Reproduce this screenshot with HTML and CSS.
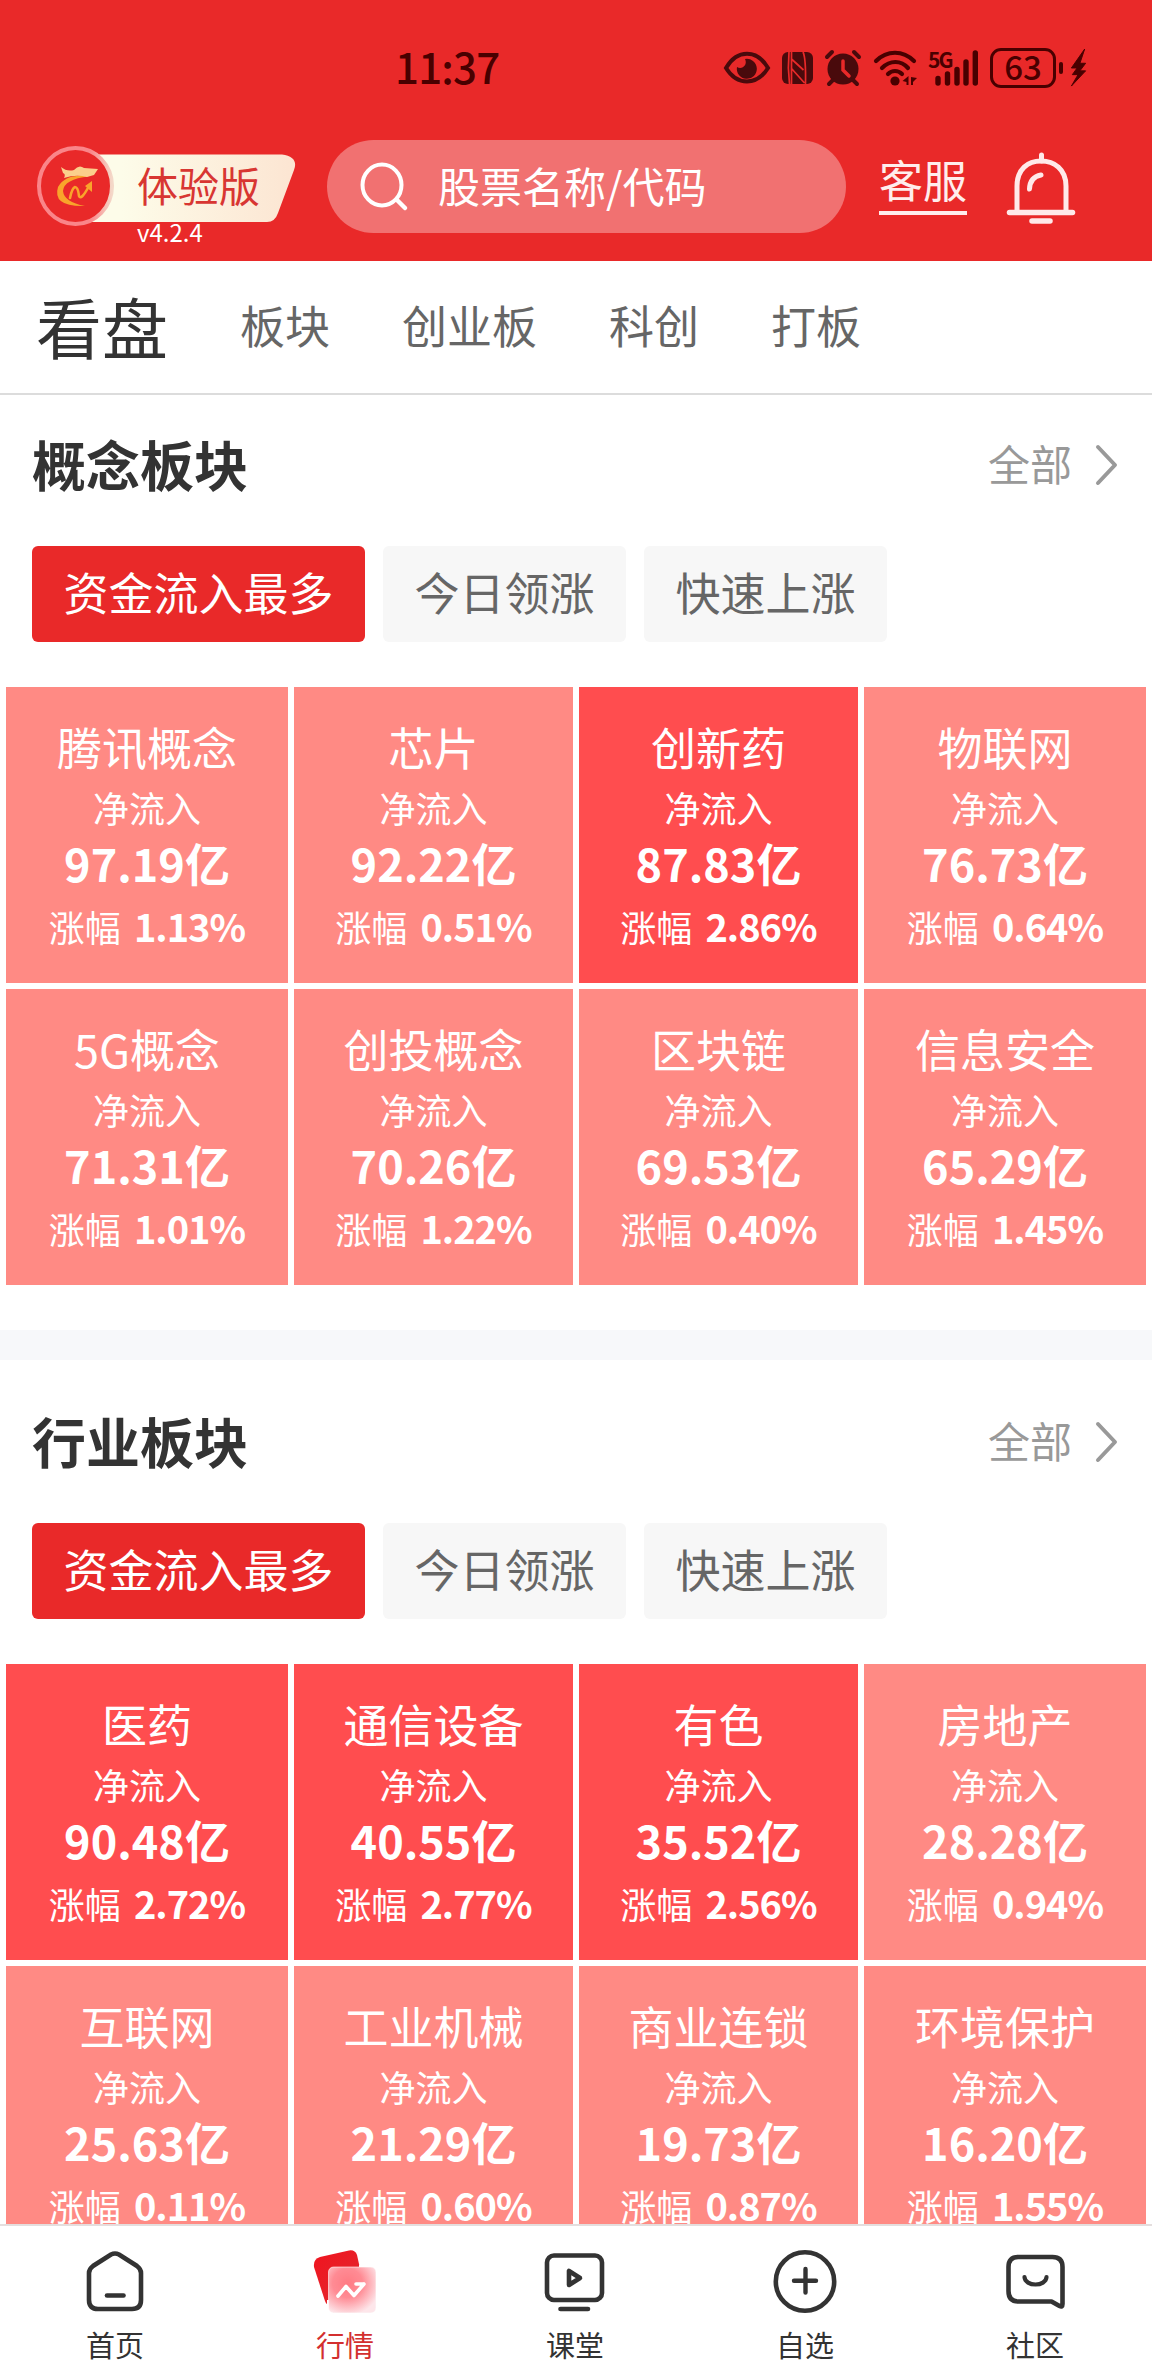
FILE: index.html
```html
<!DOCTYPE html>
<html lang="zh-CN">
<head>
  <meta charset="UTF-8" />
  <meta name="viewport" content="width=device-width, initial-scale=1" />
  <title>行情</title>
  <link rel="stylesheet" href="styles.css">
</head>
<body>
  <header class="header">
    <div class="status">
      <div class="time">11:37</div>
      <div class="status-icons">
        <svg class="i-eye" width="46" height="34" viewBox="0 0 46 34"><path d="M2 17C13-2 33-2 44 17C33 35 13 35 2 17Z" fill="none" stroke="#490a0c" stroke-width="4"/><path d="M21 8a10 10 0 1 1-8 8c5 3 11-2 8-8z" fill="#490a0c"/></svg>
        <svg class="i-nfc" width="31" height="34" viewBox="0 0 31 34"><rect width="31" height="32" y="1" rx="6" fill="#490a0c"/><path d="M7 1Q5.500 17 7.500 33M21 1Q24 7 23.500 33M9.500 1V33M9.500 8L21.500 19M9.500 17.500L22.500 32" stroke="#e92929" stroke-width="1.700" fill="none"/></svg>
        <svg class="i-alarm" width="36" height="36" viewBox="0 0 36 36"><circle cx="18" cy="19" r="15.5" fill="#490a0c"/><path d="M2 7L7 2M34 7L29 2M8 30L4 34M28 30L32 34" stroke="#490a0c" stroke-width="4" stroke-linecap="round"/><path d="M18 11V20L24 26" fill="none" stroke="#e92929" stroke-width="3.5" stroke-linecap="round"/></svg>
        <svg class="i-wifi" width="46" height="38" viewBox="0 0 46 38"><g fill="none" stroke="#490000" stroke-width="4.2" stroke-linecap="round"><path d="M3 12C14 1 30 1 41 12"/><path d="M9 19C17 11 28 11 35 19"/><path d="M15 25C19 21 25 21 29 25"/></g><circle cx="22" cy="32" r="4.6" fill="#490000"/><path d="M35.500 27v9h-2v-3l-4-1zM38 28l6 1-4 4v3h-2z" fill="#490000"/></svg>
        <div class="signal">
          <span class="net">5G</span>
          <svg width="50" height="37" viewBox="0 0 50 37"><path d="M10 29.500V34M19.500 25V34M29 20.500V34M38 13V34M47.300 4V34" stroke="#490000" stroke-width="5.400" stroke-linecap="round"/></svg>
        </div>
        <div class="battery">63</div>
        <div class="battery-tip"></div>
        <svg class="i-bolt" width="17" height="38" viewBox="0 0 17 40"><path d="M15 0L1 20H7L2 27H8L1 39L16 23H10L16 15H10Z" fill="#490000" stroke="#490000" stroke-linejoin="round"/></svg>
      </div>
    </div>
    <div class="topbar">
      <div class="brand">
        <svg width="264" height="82" viewBox="0 0 264 82">
          <defs>
            <linearGradient id="cream" x1="0" x2="1" y1="0" y2="0"><stop offset="0.150" stop-color="#fdfce9"/><stop offset="1" stop-color="#fce5d2"/></linearGradient>
            <linearGradient id="ring" x1="0" x2="1" y1="0" y2="0"><stop offset="0" stop-color="#fa8589"/><stop offset="0.700" stop-color="#fa8589"/><stop offset="1" stop-color="#f4d8c8"/></linearGradient>
          </defs>
          <path d="M55 9.500H246Q263 12 258 25L242 68Q239 77 231 77H55Z" fill="url(#cream)"/>
          <ellipse cx="39.500" cy="41" rx="36.500" ry="38" fill="#e92929" stroke="url(#ring)" stroke-width="4"/>
          <path d="M53 31.500Q30 28 22 42Q16 62 49 61Q28 57 27 46Q28 34 53 31.500Z" fill="#f9a42b"/>
          <path d="M25 22Q31 27 38 25Q43 19 48 23L62 24L58 30L51 32Q40 29 28 33Q30 29 27 28Z" fill="#fbcf8c"/>
          <path d="M34 53Q36 43 39 42Q42 42 43 51Q45 56 53 41" fill="none" stroke="#f9a42b" stroke-width="2.600" stroke-linecap="round"/>
          <path d="M49 41L56 36V47Z" fill="#f9a42b"/>
        </svg>
        <span class="brand-name">体验版</span>
        <span class="version">v4.2.4</span>
      </div>
      <div class="search">
        <svg width="48" height="50" viewBox="0 0 48 50"><ellipse cx="22" cy="23" rx="19.500" ry="20.500" fill="none" stroke="#fff" stroke-width="4"/><path d="M37 38L45 46" stroke="#fff" stroke-width="4.500" stroke-linecap="round"/></svg>
        <span>股票名称/代码</span>
      </div>
      <div class="service">客服</div>
      <svg class="bell" width="70" height="74" viewBox="0 0 70 74"><g fill="none" stroke="#ffe9e9" stroke-linecap="round"><path d="M35.500 2V8" stroke-width="5"/><path d="M11 59V33C11 16 22 8 35 8S60 16 60 33V59" stroke-width="5"/><path d="M3.500 59.500H66.500" stroke-width="5.500"/><path d="M26 68H44" stroke-width="5.500"/><path d="M23.500 36Q24 24 35 22" stroke-width="5"/></g></svg>
    </div>
  </header>

  <nav class="tabs">
    <span class="tab active">看盘</span>
    <span class="tab">板块</span>
    <span class="tab">创业板</span>
    <span class="tab">科创</span>
    <span class="tab">打板</span>
  </nav>

  <main class="content">
    <section class="board">
      <div class="board-head">
        <h2>概念板块</h2>
        <div class="more">全部<svg width="22" height="40" viewBox="0 0 22 40"><path d="M2 2L19 20L2 38" fill="none" stroke="#999" stroke-width="4" stroke-linecap="round" stroke-linejoin="round"/></svg></div>
      </div>
      <div class="filters">
        <button class="filter on">资金流入最多</button>
        <button class="filter">今日领涨</button>
        <button class="filter">快速上涨</button>
      </div>
      <div class="grid">
        <div class="cell"><div class="name">腾讯概念</div><div class="label">净流入</div><div class="amount">97.19亿</div><div class="rate">涨幅 <b>1.13%</b></div></div>
        <div class="cell"><div class="name">芯片</div><div class="label">净流入</div><div class="amount">92.22亿</div><div class="rate">涨幅 <b>0.51%</b></div></div>
        <div class="cell hot"><div class="name">创新药</div><div class="label">净流入</div><div class="amount">87.83亿</div><div class="rate">涨幅 <b>2.86%</b></div></div>
        <div class="cell"><div class="name">物联网</div><div class="label">净流入</div><div class="amount">76.73亿</div><div class="rate">涨幅 <b>0.64%</b></div></div>
        <div class="cell"><div class="name">5G概念</div><div class="label">净流入</div><div class="amount">71.31亿</div><div class="rate">涨幅 <b>1.01%</b></div></div>
        <div class="cell"><div class="name">创投概念</div><div class="label">净流入</div><div class="amount">70.26亿</div><div class="rate">涨幅 <b>1.22%</b></div></div>
        <div class="cell"><div class="name">区块链</div><div class="label">净流入</div><div class="amount">69.53亿</div><div class="rate">涨幅 <b>0.40%</b></div></div>
        <div class="cell"><div class="name">信息安全</div><div class="label">净流入</div><div class="amount">65.29亿</div><div class="rate">涨幅 <b>1.45%</b></div></div>
      </div>
    </section>

    <div class="divider"></div>

    <section class="board">
      <div class="board-head">
        <h2>行业板块</h2>
        <div class="more">全部<svg width="22" height="40" viewBox="0 0 22 40"><path d="M2 2L19 20L2 38" fill="none" stroke="#999" stroke-width="4" stroke-linecap="round" stroke-linejoin="round"/></svg></div>
      </div>
      <div class="filters">
        <button class="filter on">资金流入最多</button>
        <button class="filter">今日领涨</button>
        <button class="filter">快速上涨</button>
      </div>
      <div class="grid">
        <div class="cell hot"><div class="name">医药</div><div class="label">净流入</div><div class="amount">90.48亿</div><div class="rate">涨幅 <b>2.72%</b></div></div>
        <div class="cell hot"><div class="name">通信设备</div><div class="label">净流入</div><div class="amount">40.55亿</div><div class="rate">涨幅 <b>2.77%</b></div></div>
        <div class="cell hot"><div class="name">有色</div><div class="label">净流入</div><div class="amount">35.52亿</div><div class="rate">涨幅 <b>2.56%</b></div></div>
        <div class="cell"><div class="name">房地产</div><div class="label">净流入</div><div class="amount">28.28亿</div><div class="rate">涨幅 <b>0.94%</b></div></div>
        <div class="cell"><div class="name">互联网</div><div class="label">净流入</div><div class="amount">25.63亿</div><div class="rate">涨幅 <b>0.11%</b></div></div>
        <div class="cell"><div class="name">工业机械</div><div class="label">净流入</div><div class="amount">21.29亿</div><div class="rate">涨幅 <b>0.60%</b></div></div>
        <div class="cell"><div class="name">商业连锁</div><div class="label">净流入</div><div class="amount">19.73亿</div><div class="rate">涨幅 <b>0.87%</b></div></div>
        <div class="cell"><div class="name">环境保护</div><div class="label">净流入</div><div class="amount">16.20亿</div><div class="rate">涨幅 <b>1.55%</b></div></div>
      </div>
    </section>
  </main>

  <footer class="tabbar">
    <a class="item">
      <svg width="64" height="64" viewBox="0 0 64 64"><path d="M28 4.500Q32 2.500 36 4.500L54 16Q58 19 58 23V50Q58 59 49 59H15Q6 59 6 50V23Q6 19 10 16Z" fill="none" stroke="#333" stroke-width="4.600"/><path d="M24 45.500H40.500" stroke="#333" stroke-width="4.600" stroke-linecap="round"/></svg>
      <span>首页</span>
    </a>
    <a class="item current">
      <svg width="64" height="64" viewBox="0 0 64 64">
        <defs>
          <linearGradient id="card" x1="0" x2="1" y1="0" y2="1"><stop offset="0" stop-color="#f0141e"/><stop offset="1" stop-color="#e02c33"/></linearGradient>
          <radialGradient id="glass" cx="0.400" cy="0.350" r="0.700"><stop offset="0" stop-color="#ff7b84"/><stop offset="0.450" stop-color="#ff8b94"/><stop offset="1" stop-color="#fde6ea"/></radialGradient>
        </defs>
        <path d="M7 7L36 .500Q42 -.500 44 5L53 46Q53 50 49 51L20 56Q14 57 12 51L1 17Q0 9 7 7Z" fill="url(#card)"/>
        <rect x="46" y="15" width="18" height="49" fill="#fff"/>
        <rect x="14" y="50" width="50" height="14" fill="#fff"/>
        <rect x="15.500" y="17" width="47.500" height="46" rx="5" fill="url(#glass)" stroke="#fff" stroke-opacity=".6"/>
        <path d="M25 46L33 36.500L41 45.500L51 34M43 34H51" fill="none" stroke="#fff" stroke-width="3.600" stroke-linecap="round" stroke-linejoin="round"/>
      </svg>
      <span>行情</span>
    </a>
    <a class="item">
      <svg width="64" height="64" viewBox="0 0 64 64"><rect x="4" y="5.500" width="55" height="44.500" rx="7" fill="none" stroke="#333" stroke-width="4.600"/><path d="M26 21V35L37 28Z" fill="none" stroke="#333" stroke-width="4.600" stroke-linejoin="round"/><path d="M17.500 59H45" stroke="#333" stroke-width="4.600" stroke-linecap="round"/></svg>
      <span>课堂</span>
    </a>
    <a class="item">
      <svg width="64" height="64" viewBox="0 0 64 64"><circle cx="32" cy="31.500" r="29.200" fill="none" stroke="#333" stroke-width="4.600"/><path d="M21 30.800H43M32.500 19V42.500" stroke="#333" stroke-width="4.400" stroke-linecap="round"/></svg>
      <span>自选</span>
    </a>
    <a class="item">
      <svg width="64" height="64" viewBox="-1.500 0 64 64"><path d="M14 7H48Q58 7 58 17V54Q58 57.500 55 56L47 51.500H14Q4 51.500 4 41V17Q4 7 14 7Z" fill="none" stroke="#333" stroke-width="4.600" stroke-linejoin="round"/><path d="M20 27C20.500 37 41.500 37 42 27" fill="none" stroke="#333" stroke-width="4.200" stroke-linecap="round"/></svg>
      <span>社区</span>
    </a>
  </footer>
</body>
</html>
```
FILE: styles.css
```css
* {
  box-sizing: border-box;
}
body {
  font-family: "Noto Sans CJK SC", sans-serif;
  margin: 0;
  height: 2376px;
  display: flex;
  flex-direction: column;
  overflow: hidden;
  background: #fff;
  color: #333;
}
svg {
  display: block;
  flex: none;
  overflow: visible;
}
.header {
  height: 261px;
  flex: none;
  background: #e92929;
}
.status {
  display: flex;
  justify-content: space-between;
  height: 140px;
  padding: 49px 65px 0 395px;
  color: #490000;
}
.time {
  font-size: 42px;
  line-height: 34px;
  letter-spacing: -0.8px;
  font-weight: 500;
}
.status-icons {
  display: flex;
  align-items: center;
  height: 37px;
}
.i-eye { margin-right: 12px; }
.i-nfc { margin-right: 12px; }
.i-alarm { margin-right: 12px; }
.i-wifi { margin-right: 9px; }
.signal {
  position: relative;
  margin-right: 12px;
}
.net {
  position: absolute;
  left: 0;
  top: 1px;
  font-size: 21px;
  line-height: 18px;
  letter-spacing: -2px;
  font-weight: 700;
}
.battery {
  width: 66px;
  height: 40px;
  border: 3px solid #490000;
  border-radius: 11px;
  font-size: 33px;
  line-height: 31px;
  font-weight: 500;
  text-align: center;
}
.battery-tip {
  width: 4px;
  height: 12px;
  margin: 0 7px 0 3px;
  border-radius: 2px;
  background: #490000;
}
.topbar {
  display: flex;
  height: 121px;
  padding-left: 36px;
}
.brand {
  position: relative;
  flex: none;
  width: 264px;
  padding-top: 5px;
  margin-right: 27px;
}
.brand-name {
  position: absolute;
  left: 101px;
  top: 20px;
  font-size: 41px;
  line-height: 48px;
  color: #d83632;
  white-space: nowrap;
}
.version {
  position: absolute;
  left: 101px;
  top: 77px;
  font-size: 24px;
  line-height: 30px;
  color: #fff;
}
.search {
  display: flex;
  align-items: center;
  flex: none;
  width: 519px;
  height: 93px;
  padding-left: 33px;
  border-radius: 47px;
  background: #f17171;
  color: #fff;
  font-size: 42px;
}
.search span {
  margin-left: 30px;
  padding-bottom: 4px;
}
.service {
  flex: none;
  height: 75px;
  margin-left: 33px;
  border-bottom: 4px solid #ffeded;
  color: #ffeded;
  font-size: 44px;
  line-height: 78px;
  white-space: nowrap;
}
.bell {
  margin: 13px 0 0 39px;
}
.tabs {
  display: flex;
  align-items: center;
  gap: 72px;
  height: 134px;
  flex: none;
  padding: 0 36px 5px;
  border-bottom: 2px solid #dcdcdc;
}
.tab {
  font-size: 45px;
  color: #666;
}
.tab.active {
  font-size: 66px;
  color: #333;
}
.content {
  flex: 1;
  min-height: 0;
  overflow: hidden;
}
.board {
  padding-bottom: 45px;
}
.board-head {
  display: flex;
  align-items: center;
  justify-content: space-between;
  height: 151px;
  padding: 0 34px 13px 32px;
}
.board-head h2 {
  margin: 0;
  font-size: 54px;
  line-height: 70px;
}
.more {
  display: flex;
  align-items: center;
  gap: 24px;
  padding-bottom: 3px;
  font-size: 42px;
  color: #999;
}
.more svg {
  margin-top: 5px;
}
.filters {
  display: flex;
  gap: 18px;
  padding: 0 32px;
}
.filter {
  height: 96px;
  padding: 0 31.5px 5px;
  border: 0;
  border-radius: 6px;
  background: #f7f7f7;
  color: #666;
  font-family: inherit;
  font-size: 45px;
}
.filter.on {
  background: #e92929;
  color: #fff;
}
.grid {
  display: grid;
  grid-template-columns: 282px 279px 279px 282px;
  grid-auto-rows: 296px;
  gap: 6px;
  padding: 45px 6px 0;
}
.cell {
  padding-top: 30px;
  background: #ff8a84;
  color: #fff;
  text-align: center;
}
.cell.hot {
  background: #ff4d4f;
}
.name {
  font-size: 45px;
  line-height: 59px;
}
.label {
  font-size: 36px;
  line-height: 63px;
}
.amount {
  font-size: 45px;
  line-height: 47px;
  font-weight: 700;
}
.rate {
  font-size: 36px;
  line-height: 80px;
  white-space: nowrap;
}
.rate b {
  margin-left: 5px;
  font-size: 38px;
  letter-spacing: -1px;
}
.divider {
  height: 30px;
  background: #f7f8fa;
}
.divider + .board .board-head {
  height: 163px;
  padding-top: 12px;
}
.tabbar {
  display: flex;
  height: 152px;
  flex: none;
  padding-right: 2px;
  border-top: 2px solid #e4dede;
  background: #fff;
}
.item {
  flex: 1;
  display: flex;
  flex-direction: column;
  align-items: center;
  padding-top: 24px;
  font-size: 29px;
  line-height: 40px;
}
.item span {
  margin-top: 10px;
}
.current {
  color: #d32f2f;
}
```
